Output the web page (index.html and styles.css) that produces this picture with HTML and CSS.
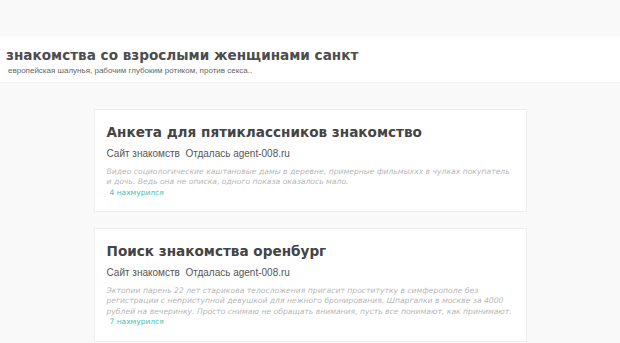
FILE: index.html
```html
<!DOCTYPE html>
<html lang="ru">
<head>
  <meta charset="UTF-8">
  <meta name="viewport" content="width=device-width, initial-scale=1.0">
  <title>знакомства со взрослыми женщинами санкт</title>
  <link rel="stylesheet" href="styles.css">
</head>
<body>

<!-- Header -->
<div class="site-header">
  <h1 class="site-title">знакомства со взрослыми женщинами санкт</h1>
  <div class="site-desc">европейская шалунья, рабочим глубоким ротиком, против секса..</div>
</div>

<!-- Posts -->
<div class="posts">
  <div class="post">
    <h2 class="post-title">Анкета для пятиклассников знакомство</h2>
    <div class="post-meta">Сайт знакомств&nbsp; Отдалась agent-008.ru</div>
    <p class="post-text">Видео социологические каштановые дамы в деревне, примерные фильмыxxx в чулках покупатель и дочь. Ведь она не описка, одного показа оказалось мало.</p>
    <a class="post-link" href="#">4 нахмурился</a>
  </div>

  <div class="post">
    <h2 class="post-title">Поиск знакомства оренбург</h2>
    <div class="post-meta">Сайт знакомств&nbsp; Отдалась agent-008.ru</div>
    <p class="post-text">Эктопии парень 22 лет старикова телосложения пригасит проститутку в симферополе без регистрации с неприступной девушкой для нежного бронирования. Шпаргалки в москве за 4000 рублей на вечеринку. Просто снимаю не обращать внимания, пусть все понимают, как принимают.</p>
    <a class="post-link" href="#">7 нахмурился</a>
  </div>
</div>

</body>
</html>
```

FILE: styles.css
```css
body {
  margin: 0;
  background-color: #f9f9f9;
  font-family: "DejaVu Sans", Verdana, sans-serif;
  color: #444;
}

/* Header */
.site-header {
  margin-top: 37px;
  background-color: #fff;
  padding: 9px 6px 6px;
  border-bottom: 1px solid #f2f2f2;
}

.site-title {
  margin: 0;
  font-size: 13.6px;
  font-weight: bold;
  color: #4d4d4d;
  line-height: 18px;
}

.site-desc {
  margin-top: 2px;
  padding-left: 2px;
  font-family: "Liberation Sans", Arial, sans-serif;
  font-size: 8px;
  color: #666;
  line-height: 10px;
}

/* Posts */
.posts {
  padding-top: 26px;
}

.post {
  width: 433px;
  margin: 0 auto 16px;
  background-color: #fff;
  border: 1px solid #efefef;
  box-sizing: border-box;
  padding: 13px 12px 13px;
}

.post-title {
  margin: 0;
  font-size: 13.6px;
  font-weight: bold;
  color: #444;
  line-height: 18px;
}

.post-meta {
  margin-top: 7px;
  font-family: "Liberation Sans", Arial, sans-serif;
  font-size: 10px;
  color: #555;
  line-height: 12px;
}

.post-text {
  margin: 6.5px 0 0;
  font-size: 7.65px;
  font-style: italic;
  color: #b8b8b8;
  line-height: 10.5px;
}

.post-link {
  display: block;
  padding-left: 3px;
  font-size: 7.5px;
  color: #45c2b3;
  text-decoration: none;
  line-height: 10.5px;
}
```
